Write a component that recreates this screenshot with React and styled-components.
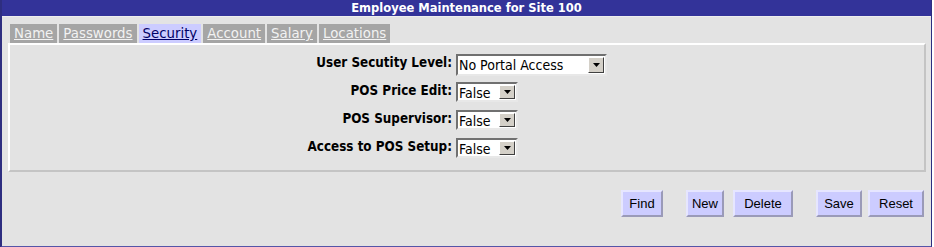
import React from "react";
import styled, { createGlobalStyle } from "styled-components";

const GlobalStyle = createGlobalStyle`
  body {
    margin: 0;
    background: #ffffff;
    font-family: "DejaVu Sans", Verdana, sans-serif;
  }
`;

const tabs = ["Name", "Passwords", "Security", "Account", "Salary", "Locations"];

const fields = [
  { label: "User Secutity Level:", value: "No Portal Access", width: 151, height: 22 },
  { label: "POS Price Edit:", value: "False", width: 62, height: 20 },
  { label: "POS Supervisor:", value: "False", width: 62, height: 20 },
  { label: "Access to POS Setup:", value: "False", width: 62, height: 20 },
];

const Select = ({ value, width, height }) => (
  <SelectBox $w={width} $h={height}>
    <SelectText>{value}</SelectText>
    <SelectArrow>
      <svg width="7" height="4" viewBox="0 0 7 4">
        <path d="M0 0h7L3.5 4z" fill="#000" />
      </svg>
    </SelectArrow>
  </SelectBox>
);

const App = () => {
  const current = 2;

  return (
    <>
      <GlobalStyle />
      <Frame>
        <TitleBar>Employee Maintenance for Site 100</TitleBar>
        <Body>
          <TabRow>
            {tabs.map((t, idx) => (
              <TabElement key={t} className={idx === current ? "isActive" : ""}>
                {t}
              </TabElement>
            ))}
          </TabRow>
          <Panel>
            <FormGrid>
              {fields.map((f) => (
                <React.Fragment key={f.label}>
                  <Label>{f.label}</Label>
                  <div>
                    <Select value={f.value} width={f.width} height={f.height} />
                  </div>
                </React.Fragment>
              ))}
            </FormGrid>
          </Panel>
          <ButtonBar>
            <ButtonGroup>
              <Button $w={42}>Find</Button>
            </ButtonGroup>
            <ButtonGroup $gap={9}>
              <Button $w={38}>New</Button>
              <Button $w={60}>Delete</Button>
            </ButtonGroup>
            <ButtonGroup $gap={6}>
              <Button $w={46}>Save</Button>
              <Button $w={56}>Reset</Button>
            </ButtonGroup>
          </ButtonBar>
        </Body>
      </Frame>
    </>
  );
};

const Frame = styled.div`
  width: 932px;
  box-sizing: border-box;
  border-left: 2px solid #2e2e80;
  border-right: 1px solid #2e2e80;
  border-bottom: 2px solid #5555a8;
`;

const TitleBar = styled.div`
  height: 16px;
  line-height: 16px;
  background: #333399;
  color: #ffffff;
  font-weight: bold;
  font-size: 11.5px;
  text-align: center;
  border-bottom: 1px solid #eeeeee;
`;

const Body = styled.div`
  background: #e3e3e3;
  padding: 7px 5px 29px 6px;
`;

const TabRow = styled.ul`
  display: flex;
  gap: 2px;
  margin: 0 0 0 2px;
  padding: 0;
  list-style: none;
`;

const TabElement = styled.li`
  height: 19px;
  line-height: 19px;
  padding: 0 4px;
  background: #a5a5a5;
  color: #f2f2f2;
  font-size: 13.33px;
  text-decoration: underline;
  cursor: pointer;

  &.isActive {
    background: #ccccff;
    color: #000066;
  }
`;

const Panel = styled.div`
  border: 2px solid;
  border-color: #ffffff #c4c4c4 #c4c4c4 #ffffff;
  padding: 9px 0 4px;
`;

const FormGrid = styled.div`
  display: grid;
  grid-template-columns: 442px 1fr;
  grid-auto-rows: 28px;
  column-gap: 4px;
`;

const Label = styled.div`
  text-align: right;
  font-family: "DejaVu Sans Condensed", "DejaVu Sans", sans-serif;
  font-stretch: condensed;
  font-weight: bold;
  font-size: 13.33px;
  line-height: 18px;
  color: #000000;
`;

const SelectBox = styled.div`
  display: flex;
  align-items: stretch;
  box-sizing: border-box;
  width: ${(p) => p.$w}px;
  height: ${(p) => p.$h}px;
  background: #ffffff;
  border: 2px solid;
  border-color: #707070 #e8e8e8 #e8e8e8 #707070;
`;

const SelectText = styled.div`
  flex: 1;
  padding-left: 1px;
  font-family: "DejaVu Sans Condensed", "DejaVu Sans", sans-serif;
  font-stretch: condensed;
  font-size: 14px;
  line-height: 18px;
  color: #000000;
  white-space: nowrap;
  overflow: hidden;
`;

const SelectArrow = styled.div`
  width: 16px;
  margin: 1px;
  display: flex;
  align-items: center;
  justify-content: center;
  box-sizing: border-box;
  background: #d4d0c8;
  border: 1px solid;
  border-color: #ffffff #404040 #404040 #ffffff;
`;

const ButtonBar = styled.div`
  display: flex;
  justify-content: flex-end;
  gap: 23px;
  margin-top: 18px;
  padding-right: 2px;
`;

const ButtonGroup = styled.div`
  display: flex;
  gap: ${(p) => p.$gap || 0}px;
`;

const Button = styled.button`
  width: ${(p) => p.$w}px;
  height: 27px;
  padding: 0;
  background: #ccccff;
  border: 2px solid;
  border-color: #e6e6ff #9a9ab8 #9a9ab8 #e6e6ff;
  font-family: "Liberation Sans", Arial, sans-serif;
  font-size: 13px;
  color: #000000;
  cursor: pointer;
`;

export default App;
